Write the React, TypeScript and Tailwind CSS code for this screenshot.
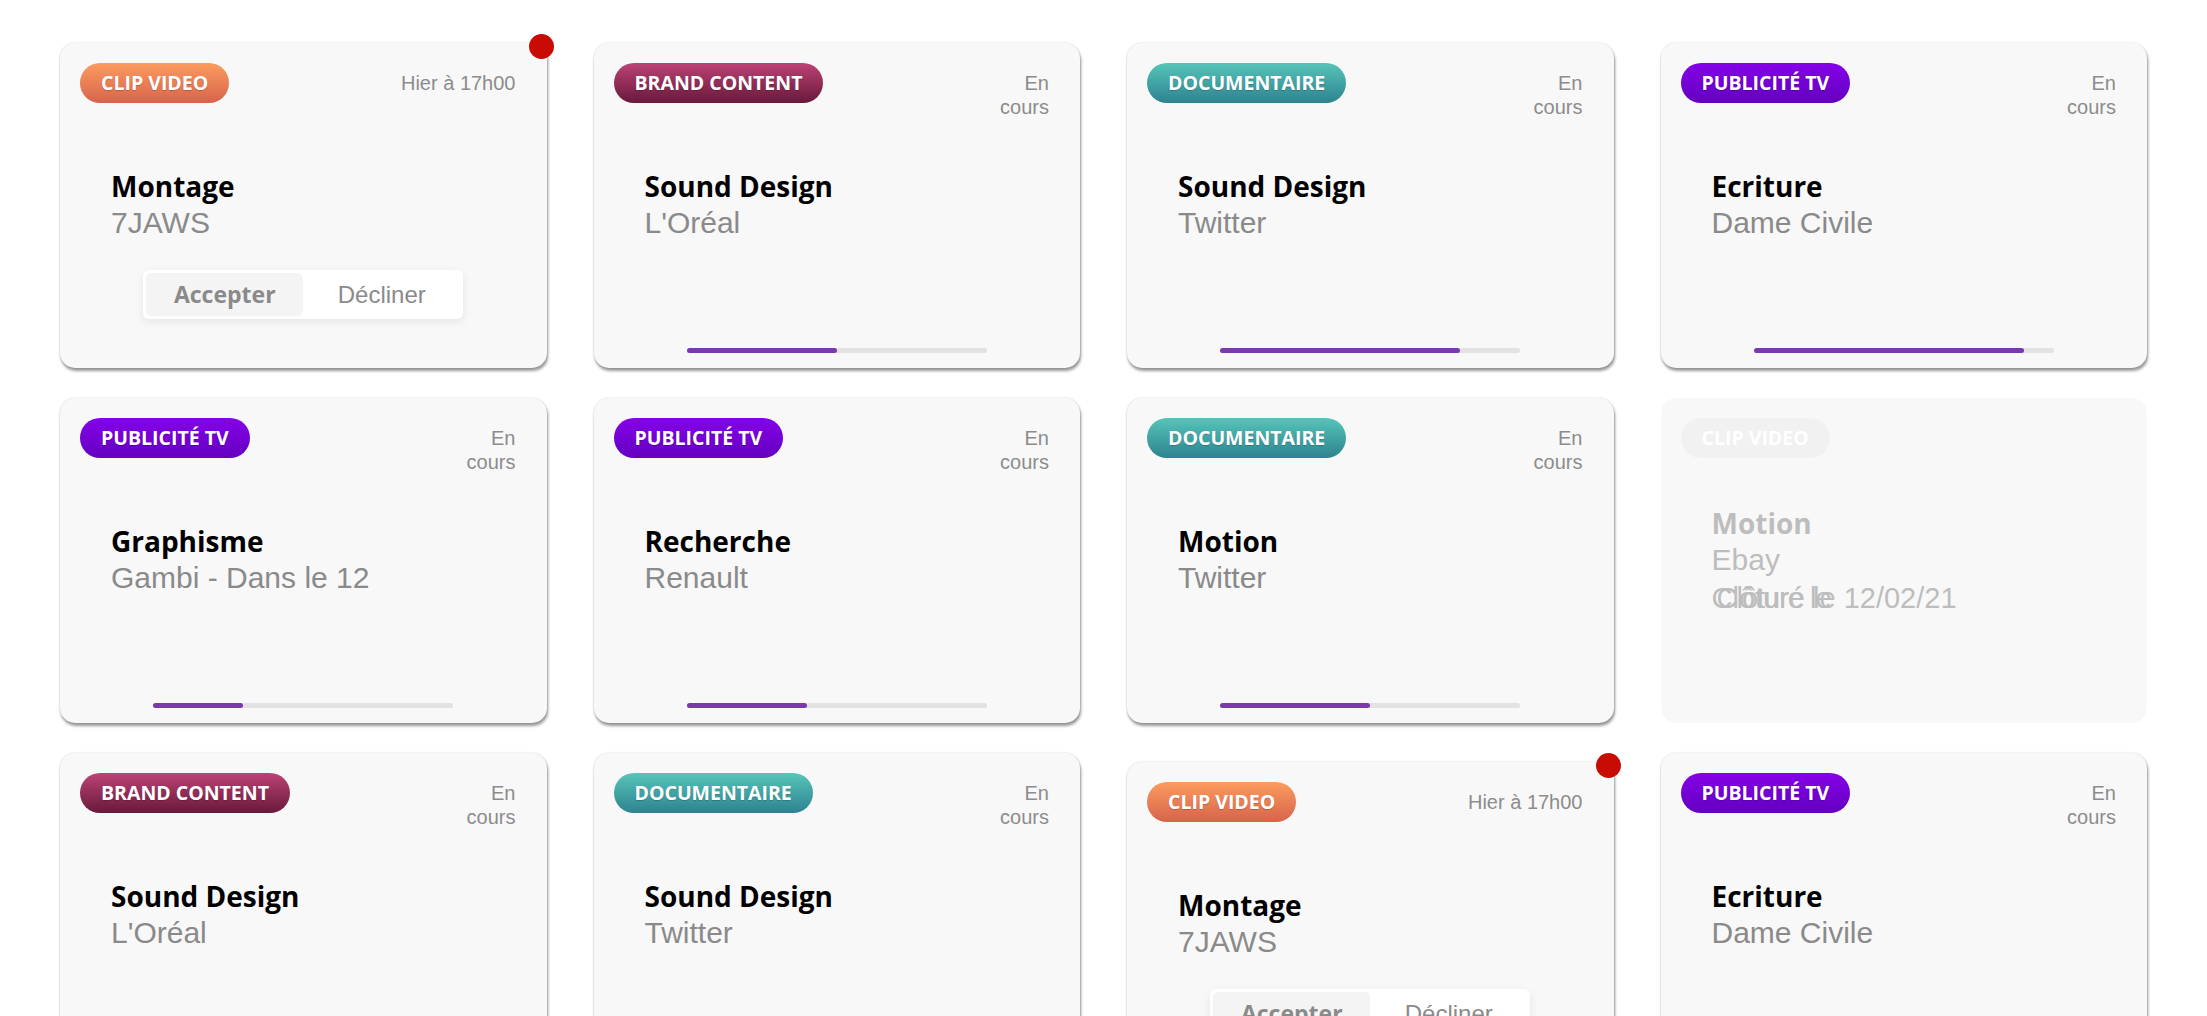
import React from 'react'

type Tag = 'clip' | 'brand' | 'doc' | 'pub'

type Mission = {
  tag: Tag
  status: string
  title: string
  client: string
  progress?: number
  pending?: boolean
  closed?: string
  shifted?: boolean
}

const tagStyles: Record<Tag, { label: string; className: string }> = {
  clip: { label: 'CLIP VIDEO', className: 'bg-gradient-to-b from-[#fc9c5f] to-[#d6634b]' },
  brand: { label: 'BRAND CONTENT', className: 'bg-gradient-to-b from-[#bd4376] to-[#69193c]' },
  doc: { label: 'DOCUMENTAIRE', className: 'bg-gradient-to-b from-[#56c5b9] to-[#2e838f]' },
  pub: { label: 'PUBLICITÉ TV', className: 'bg-gradient-to-b from-[#8502e8] to-[#6400c0]' },
}

const missions: Mission[] = [
  { tag: 'clip', status: 'Hier à 17h00', title: 'Montage', client: '7JAWS', pending: true },
  { tag: 'brand', status: 'En cours', title: 'Sound Design', client: "L'Oréal", progress: 50 },
  { tag: 'doc', status: 'En cours', title: 'Sound Design', client: 'Twitter', progress: 80 },
  { tag: 'pub', status: 'En cours', title: 'Ecriture', client: 'Dame Civile', progress: 90 },
  { tag: 'pub', status: 'En cours', title: 'Graphisme', client: 'Gambi - Dans le 12', progress: 30 },
  { tag: 'pub', status: 'En cours', title: 'Recherche', client: 'Renault', progress: 40 },
  { tag: 'doc', status: 'En cours', title: 'Motion', client: 'Twitter', progress: 50 },
  { tag: 'clip', status: '', title: 'Motion', client: 'Ebay', closed: 'Clôturé le 12/02/21' },
  { tag: 'brand', status: 'En cours', title: 'Sound Design', client: "L'Oréal", progress: 50 },
  { tag: 'doc', status: 'En cours', title: 'Sound Design', client: 'Twitter', progress: 80 },
  { tag: 'clip', status: 'Hier à 17h00', title: 'Montage', client: '7JAWS', pending: true, shifted: true },
  { tag: 'pub', status: 'En cours', title: 'Ecriture', client: 'Dame Civile', progress: 90 },
]

const sans = "font-['Liberation_Sans',Arial,sans-serif]"
const heading = "font-['Open_Sans','Noto_Sans',sans-serif]"

function Badge({ tag, faded }: { tag: Tag; faded?: boolean }) {
  const t = tagStyles[tag]
  return (
    <span
      className={`${heading} inline-flex h-[40px] items-center rounded-full px-[21px] text-[19.5px] font-bold leading-none text-white ${
        faded ? 'bg-[#f1f1f1]' : `${t.className} [text-shadow:0_1px_1px_rgba(0,0,0,0.2)]`
      }`}
    >
      {t.label}
    </span>
  )
}

function MissionCard({ m }: { m: Mission }) {
  const faded = !!m.closed
  return (
    <div
      className={`relative grid h-[325px] grid-rows-[100px_1fr_100px] rounded-[15px] bg-[#f8f8f8] ${
        faded ? '' : 'shadow-[1px_3px_3px_rgba(0,0,0,0.4),0_0_2px_rgba(0,0,0,0.18)]'
      } ${m.shifted ? 'translate-y-[9px]' : ''}`}
    >
      {m.pending && (
        <span className="absolute -right-[7px] -top-[9px] h-[25px] w-[25px] rounded-full bg-[#c80b03]" />
      )}

      <div className="flex items-start justify-between pl-[20px] pr-[31px] pt-[20px]">
        <Badge tag={m.tag} faded={faded} />
        {m.status && (
          <span
            className={`${sans} mt-[8px] text-right text-[20px] leading-[24px] text-[#8c8c8c] ${
              m.pending ? 'whitespace-nowrap' : 'max-w-[60px]'
            }`}
          >
            {m.status}
          </span>
        )}
      </div>

      <div className="flex flex-col justify-center pl-[51px]">
        <div className={`${heading} text-[28px] font-bold leading-[34px] ${faded ? 'text-[#bdbdbd]' : 'text-black'}`}>
          {m.title}
        </div>
        <div className={`${sans} text-[30px] leading-[40px] ${faded ? 'text-[#bdbdbd]' : 'text-[#8a8a8a]'}`}>
          {m.client}
        </div>
        {m.closed && (
          <div className={`${sans} relative text-[29px] leading-[36px] text-[#bdbdbd]`}>
            {m.closed}
            <span className="absolute left-[5px] top-0 tracking-[-1px]">Clôture le</span>
          </div>
        )}
      </div>

      <div className="flex flex-col items-center">
        {m.pending && (
          <div className="mt-[2px] grid h-[49px] w-[320px] grid-cols-2 rounded-[6px] bg-white p-[3px] shadow-[0_3px_10px_rgba(0,0,0,0.08)]">
            <button className={`${heading} rounded-[5px] bg-[#f4f4f4] text-[23px] font-bold text-[#8a8a8a]`}>
              Accepter
            </button>
            <button className={`${sans} text-[24px] text-[#8a8a8a]`}>Décliner</button>
          </div>
        )}
        {m.progress !== undefined && (
          <div className="mt-auto mb-[15px] h-[5px] w-[300px] rounded-full bg-[#e2e2e2]">
            <div className="h-full rounded-full bg-[#7a3aab]" style={{ width: `${m.progress}%` }} />
          </div>
        )}
      </div>
    </div>
  )
}

export default function App() {
  return (
    <div className="min-h-screen bg-white px-[60px] pt-[43px]">
      <div className="grid grid-cols-4 gap-x-[47px] gap-y-[30px]">
        {missions.map((m, i) => (
          <MissionCard key={i} m={m} />
        ))}
      </div>
    </div>
  )
}
